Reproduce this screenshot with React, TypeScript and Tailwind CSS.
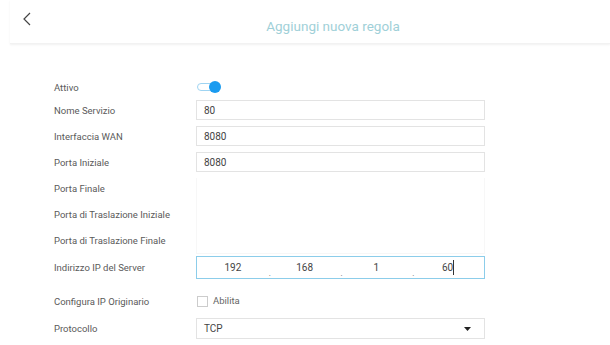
const font = { fontFamily: "Roboto, 'Liberation Sans', sans-serif" };

function Row({ label, children, h = "h-[20px]", mt = "mt-[6px]" }: { label: string; children?: React.ReactNode; h?: string; mt?: string }) {
  return (
    <div className={`flex items-center ${h} ${mt}`}>
      <div className="w-[196px] shrink-0 pl-[54px] pt-[2px] text-[9.5px] text-[#5a5a5a] whitespace-nowrap">{label}</div>
      <div className="w-[289px] shrink-0 h-full">{children}</div>
    </div>
  );
}

function TextBox({ value }: { value: string }) {
  return (
    <div className="h-full border border-[#e3e3e3] flex items-center px-[7px] pt-[1px] text-[10px] text-[#444]">{value}</div>
  );
}

export default function App() {
  const ip = ["192", "168", "1", "60"];
  return (
    <div className="w-[610px] h-[345px] bg-white overflow-hidden" style={font}>
      <div className="h-[44px] flex items-center relative ml-[10px] shadow-[0_1px_2px_rgba(0,0,0,0.06)] border-b border-[#f2f2f2]">
        <svg className="absolute left-[12px] top-[12px]" width="10" height="14" viewBox="0 0 10 14">
          <path d="M8 1L2 7l6 6" fill="none" stroke="#444" strokeWidth="1.2" />
        </svg>
        <div className="flex-1 text-center text-[13.5px] text-[#9fd0d8] pl-[46px] mt-[10px]">Aggiungi nuova regola</div>
      </div>

      <div className="pt-[33px]">
        <Row label="Attivo" mt="mt-0">
          <div className="h-full flex items-center pl-[1px]">
            <div className="relative w-[24px] h-[12px]">
              <div className="absolute left-0 top-[2px] w-[20px] h-[8px] rounded-full border border-[#9fd4f2] bg-white" />
              <div className="absolute right-0 top-0 w-[12px] h-[12px] rounded-full bg-[#1a9bf0]" />
            </div>
          </div>
        </Row>
        <Row label="Nome Servizio" mt="mt-[3px]"><TextBox value="80" /></Row>
        <Row label="Interfaccia WAN"><TextBox value="8080" /></Row>
        <Row label="Porta Iniziale"><TextBox value="8080" /></Row>
        <div className="relative">
          <div className="absolute left-[196px] top-0 w-[289px] h-[76px] border-x border-b border-[#f7f7f7]" />
          <Row label="Porta Finale" />
          <Row label="Porta di Traslazione Iniziale" />
          <Row label="Porta di Traslazione Finale" />
        </div>
        <Row label="Indirizzo IP del Server" h="h-[23px]" mt="mt-[6px]">
          <div className="h-full border border-[#8ccdea] flex text-[10px] text-[#444]">
            {ip.map((n, i) => (
              <div key={i} className="flex-1 relative flex items-center justify-center">
                <span className={i === 3 ? "border-r border-[#333]" : ""}>{n}</span>
                {i < 3 && <span className="absolute right-[-2px] top-[11px] text-[8px] text-[#666]">.</span>}
              </div>
            ))}
          </div>
        </Row>
        <Row label="Configura IP Originario" h="h-[22px]" mt="mt-[11px]">
          <div className="h-full flex items-center gap-[5px] pl-[1px]">
            <div className="w-[11px] h-[11px] border border-[#ccc]" />
            <span className="text-[9.5px] text-[#666]">Abilita</span>
          </div>
        </Row>
        <Row label="Protocollo" h="h-[21px]" mt="mt-[6px]">
          <div className="h-full border border-[#e3e3e3] flex items-center justify-between px-[7px] text-[10px] text-[#444]">
            <span>TCP</span>
            <svg width="7" height="4" viewBox="0 0 7 4" className="mr-[6px]"><path d="M0 0h7L3.5 4z" fill="#222" /></svg>
          </div>
        </Row>
      </div>
    </div>
  );
}
